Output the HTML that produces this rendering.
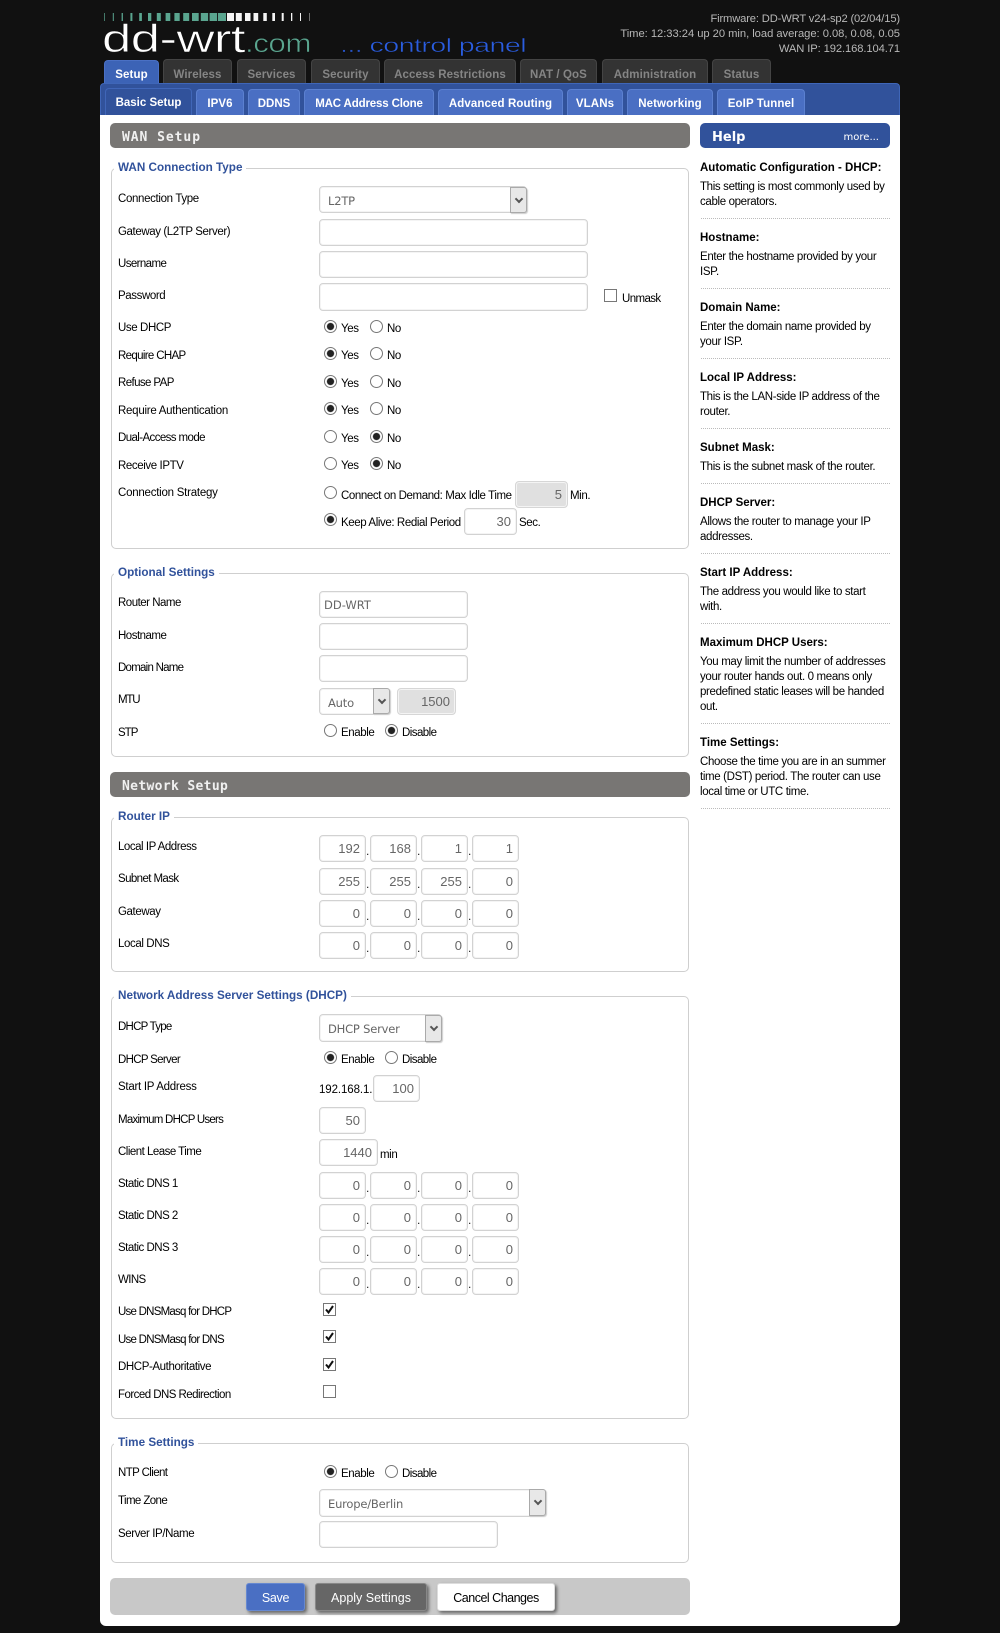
<!DOCTYPE html>
<html lang="en"><head><meta charset="utf-8"><title>DD-WRT Setup</title>
<style>
*{box-sizing:border-box}
html,body{margin:0;padding:0;background:#111}
body{position:relative;width:1000px;height:1633px;overflow:hidden;font:11.5px/14px "Liberation Sans",Arial,sans-serif;letter-spacing:-.4px;color:#000}
.t,.h,.tab,.sub,.bar,.fs,.lg,.sel,.ar,.dot,.p,.hd,.d,.btn,input,select,svg{position:absolute}
.t{white-space:nowrap;height:14px;margin-top:1px}
.h{left:500px;width:400px;text-align:right;color:#b8b8b8;font-size:11.2px;letter-spacing:-.1px;white-space:nowrap;margin-top:1px}
.tab{top:59px;height:24px;background:#333;border:1px solid #444;border-bottom:0;border-radius:4px 4px 0 0;color:#858585;font-weight:bold;font-size:11.5px;letter-spacing:.1px;text-align:center;line-height:30px}
.tab.on{top:60px;height:23px;background:#3c63b6;border-color:#4a70c4;color:#fff;line-height:28px}
#blue{position:absolute;left:100px;top:83px;width:800px;height:32px;background:#31529b;border:1px solid #3f66b8;border-bottom:0;border-radius:4px 4px 0 0}
.sub{top:89px;height:26px;background:#4a6fc3;border:1px solid #5b80d0;border-bottom:0;border-radius:4px 4px 0 0;color:#fff;font-weight:bold;font-size:11.5px;letter-spacing:.1px;text-align:center;line-height:28px}
.sub.on{top:88px;height:27px;background:#31529b;border-color:#4066b8;line-height:29px}
#main{position:absolute;left:100px;top:115px;width:800px;height:1511px;background:#fff;border-radius:0 0 6px 6px}
.bar{left:110px;width:580px;height:25px;background:#787674;border-radius:5px;color:#f0f0f0;font:bold 13px/29px "DejaVu Sans Mono",monospace;letter-spacing:.95px;padding-left:12px}
.fs{left:111px;width:578px;border:1px solid #cfcfcf;border-radius:5px}
.lg{left:114px;background:#fff;padding:0 4px;color:#31529b;font-weight:bold;font-size:11.7px;letter-spacing:0;line-height:14px;white-space:nowrap;margin-top:1px}
input[type=text],select{border:1px solid #d2d2d2;box-shadow:inset 0 0 0 1px #f4f4f4;border-radius:4px;background:#fff;height:27px;margin:0;font:13px "Liberation Sans",sans-serif;letter-spacing:0;color:#666;text-align:right;padding:0 5px;outline:0;appearance:none;-webkit-appearance:none}
input.dis{background:#e0e0e0;border-color:#d6d6d6}
select{text-align:left;padding:2px 8px 0;font:11.5px "DejaVu Sans",sans-serif!important;letter-spacing:-.2px!important}
.ar{width:17px;background:#e8e8e8;border:1px solid #aaa;box-shadow:1px 1px 1px #ccc;border-radius:0 3px 3px 0}
.ar:after{content:"";position:absolute;left:5px;top:8px;width:4px;height:4px;border:solid #555;border-width:0 2px 2px 0;transform:rotate(45deg)}
input[type=radio],input[type=checkbox]{appearance:none;-webkit-appearance:none;margin:0;width:13px;height:13px;background:#fff;border:1px solid #777}
input[type=radio]{border-radius:50%}
input[type=radio]:checked{background:radial-gradient(circle,#222 0,#222 3.2px,#fff 4px)}
.d{width:3px;color:#222;font-size:12px;line-height:14px}
.p{left:700px;width:195px;line-height:15px;white-space:nowrap;margin-top:1px;letter-spacing:-.35px}
.hd{left:700px;font-weight:bold;font-size:11.5px;letter-spacing:0;white-space:nowrap;line-height:14px;margin-top:1px}
.dot{left:701px;width:189px;border-top:1px dotted #bbb;height:0}
#help{left:700px;width:190px;background:#31529b;color:#fff;font-family:"DejaVu Sans",sans-serif;letter-spacing:0}
.btn{top:1583px;height:28px;border-radius:3px;font:12.5px/28px "Liberation Sans",sans-serif;text-align:center;box-shadow:2px 2px 3px #666;letter-spacing:0;border:1px solid #ddd}
</style></head><body>

<svg style="left:0;top:0" width="1000" height="60">
<g fill="#5aa58f">
<rect x="104" y="13" width=".7" height="8"/><rect x="112.8" y="13" width="1" height="8"/><rect x="121.6" y="13" width="1.3" height="8"/><rect x="130.4" y="13" width="2" height="8"/><rect x="139.2" y="13" width="2.7" height="8"/><rect x="148" y="13" width="3.3" height="8"/><rect x="156.8" y="13" width="4" height="8"/><rect x="165.6" y="13" width="4.7" height="8"/><rect x="174.4" y="13" width="5.3" height="8"/><rect x="183.2" y="13" width="6" height="8"/><rect x="192" y="13" width="6.7" height="8"/><rect x="200.8" y="13" width="7.3" height="8"/><rect x="209.6" y="13" width="7.5" height="8"/><rect x="218" y="13" width="8" height="8"/>
</g>
<g fill="#f4f4f4">
<rect x="227" y="13" width="7" height="8"/><rect x="235.8" y="13" width="6" height="8"/><rect x="245" y="13" width="5.5" height="8"/><rect x="253.5" y="13" width="4.7" height="8"/><rect x="263.3" y="13" width="3.5" height="8"/><rect x="272.3" y="13" width="2.7" height="8"/><rect x="281.7" y="13" width="2" height="8"/><rect x="291" y="13" width="1.3" height="8"/><rect x="300" y="13" width="1" height="8"/><rect x="309" y="13" width=".7" height="8" fill="#999"/>
</g>
<text x="102" y="52" font-family="Liberation Sans" font-size="39" fill="#fff" stroke="#111" stroke-width=".6" textLength="143" lengthAdjust="spacingAndGlyphs">dd-wrt</text>
<text x="245" y="52" font-family="Liberation Sans" font-size="26" fill="#5aa58f" stroke="#111" stroke-width=".6" textLength="66" lengthAdjust="spacingAndGlyphs">.com</text>
<text x="340" y="52" font-family="Liberation Sans" font-size="19.5" fill="#2a5de0" stroke="#111" stroke-width=".45" textLength="186" lengthAdjust="spacingAndGlyphs">... control panel</text>
</svg>
<div class="h" style="top:11px;letter-spacing:-.15px">Firmware: DD-WRT v24-sp2 (02/04/15)</div>
<div class="h" style="top:26px;letter-spacing:-.03px">Time: 12:33:24 up 20 min, load average: 0.08, 0.08, 0.05</div>
<div class="h" style="top:41px">WAN IP: 192.168.104.71</div>

<div class="tab on" style="left:104px;width:55px">Setup</div>
<div class="tab" style="left:163px;width:69px">Wireless</div>
<div class="tab" style="left:237px;width:69px">Services</div>
<div class="tab" style="left:311px;width:69px">Security</div>
<div class="tab" style="left:384px;width:132px">Access Restrictions</div>
<div class="tab" style="left:520px;width:77px">NAT / QoS</div>
<div class="tab" style="left:602px;width:106px">Administration</div>
<div class="tab" style="left:712px;width:59px">Status</div>

<div id="blue"></div>
<div class="sub on" style="left:105px;width:87px;letter-spacing:0">Basic Setup</div>
<div class="sub" style="left:196px;width:48px">IPV6</div>
<div class="sub" style="left:248px;width:52px;letter-spacing:0">DDNS</div>
<div class="sub" style="left:304px;width:130px;letter-spacing:-.15px">MAC Address Clone</div>
<div class="sub" style="left:438px;width:125px">Advanced Routing</div>
<div class="sub" style="left:567px;width:56px">VLANs</div>
<div class="sub" style="left:627px;width:86px">Networking</div>
<div class="sub" style="left:717px;width:88px">EoIP Tunnel</div>

<div id="main"></div>

<div class="bar" style="top:123px">WAN Setup</div>
<div class="bar" id="help" style="top:123px;font-weight:bold;font-size:13px">Help<span style="position:absolute;right:11px;top:0;font-weight:normal;font-size:10px;font-family:'DejaVu Sans',sans-serif">more...</span></div>

<!-- WAN Connection Type -->
<div class="fs" style="top:168px;height:381px"></div>
<div class="lg" style="top:160px">WAN Connection Type</div>
<div class="t" style="left:118px;top:191px;letter-spacing:-.35px">Connection Type</div>
<div class="t" style="left:118px;top:224px">Gateway (L2TP Server)</div>
<div class="t" style="left:118px;top:256px;letter-spacing:-.6px">Username</div>
<div class="t" style="left:118px;top:288px">Password</div>
<div class="t" style="left:118px;top:320px">Use DHCP</div>
<div class="t" style="left:118px;top:348px;letter-spacing:-.66px">Require CHAP</div>
<div class="t" style="left:118px;top:375px;letter-spacing:-.6px">Refuse PAP</div>
<div class="t" style="left:118px;top:403px;letter-spacing:-.26px">Require Authentication</div>
<div class="t" style="left:118px;top:430px;letter-spacing:-.6px">Dual-Access mode</div>
<div class="t" style="left:118px;top:458px">Receive IPTV</div>
<div class="t" style="left:118px;top:485px;letter-spacing:-.24px">Connection Strategy</div>

<select style="left:319px;top:186px;width:208px"><option>L2TP</option></select><div class="ar" style="left:510px;top:187px;height:26px"></div>
<input type="text" style="left:319px;top:219px;width:269px">
<input type="text" style="left:319px;top:251px;width:269px">
<input type="text" style="left:319px;top:283px;width:269px;height:28px">
<input type="checkbox" style="left:604px;top:289px"><div class="t" style="left:622px;top:291px;letter-spacing:-.6px">Unmask</div>

<input type="radio" checked style="left:324px;top:320px"><div class="t" style="left:341px;top:321px">Yes</div><input type="radio" style="left:370px;top:320px"><div class="t" style="left:387px;top:321px">No</div>
<input type="radio" checked style="left:324px;top:347px"><div class="t" style="left:341px;top:348px">Yes</div><input type="radio" style="left:370px;top:347px"><div class="t" style="left:387px;top:348px">No</div>
<input type="radio" checked style="left:324px;top:375px"><div class="t" style="left:341px;top:376px">Yes</div><input type="radio" style="left:370px;top:375px"><div class="t" style="left:387px;top:376px">No</div>
<input type="radio" checked style="left:324px;top:402px"><div class="t" style="left:341px;top:403px">Yes</div><input type="radio" style="left:370px;top:402px"><div class="t" style="left:387px;top:403px">No</div>
<input type="radio" style="left:324px;top:430px"><div class="t" style="left:341px;top:431px">Yes</div><input type="radio" checked style="left:370px;top:430px"><div class="t" style="left:387px;top:431px">No</div>
<input type="radio" style="left:324px;top:457px"><div class="t" style="left:341px;top:458px">Yes</div><input type="radio" checked style="left:370px;top:457px"><div class="t" style="left:387px;top:458px">No</div>
<input type="radio" style="left:324px;top:486px"><div class="t" style="left:341px;top:488px">Connect on Demand: Max Idle Time</div>
<input type="text" class="dis" value="5" style="left:515px;top:481px;width:53px">
<div class="t" style="left:570px;top:488px">Min.</div>
<input type="radio" checked style="left:324px;top:513px"><div class="t" style="left:341px;top:515px">Keep Alive: Redial Period</div>
<input type="text" value="30" style="left:464px;top:508px;width:53px">
<div class="t" style="left:519px;top:515px">Sec.</div>

<!-- Optional Settings -->
<div class="fs" style="top:573px;height:184px"></div>
<div class="lg" style="top:565px">Optional Settings</div>
<div class="t" style="left:118px;top:595px;letter-spacing:-.5px">Router Name</div>
<div class="t" style="left:118px;top:628px;letter-spacing:-.5px">Hostname</div>
<div class="t" style="left:118px;top:660px;letter-spacing:-.75px">Domain Name</div>
<div class="t" style="left:118px;top:692px;letter-spacing:-1.2px">MTU</div>
<div class="t" style="left:118px;top:725px;letter-spacing:-1px">STP</div>
<input type="text" value="DD-WRT" style="left:319px;top:591px;width:149px;text-align:left;padding-left:4px;font:11.5px 'DejaVu Sans',sans-serif">
<input type="text" style="left:319px;top:623px;width:149px">
<input type="text" style="left:319px;top:655px;width:149px">
<select style="left:319px;top:688px;width:71px"><option>Auto</option></select><div class="ar" style="left:373px;top:688px;height:26px"></div>
<input type="text" class="dis" value="1500" style="left:397px;top:688px;width:59px">
<input type="radio" style="left:324px;top:724px"><div class="t" style="left:341px;top:725px">Enable</div>
<input type="radio" checked style="left:385px;top:724px"><div class="t" style="left:402px;top:725px;letter-spacing:-.55px">Disable</div>

<div class="bar" style="top:772px;letter-spacing:.34px">Network Setup</div>

<!-- Router IP -->
<div class="fs" style="top:817px;height:155px"></div>
<div class="lg" style="top:809px">Router IP</div>
<div class="t" style="left:118px;top:839px;letter-spacing:-.47px">Local IP Address</div>
<div class="t" style="left:118px;top:871px;letter-spacing:-.6px">Subnet Mask</div>
<div class="t" style="left:118px;top:904px">Gateway</div>
<div class="t" style="left:118px;top:936px">Local DNS</div>

<input type="text" value="192" style="left:319px;top:835px;width:47px"><div class="d" style="left:366px;top:844px">.</div><input type="text" value="168" style="left:370px;top:835px;width:47px"><div class="d" style="left:417px;top:844px">.</div><input type="text" value="1" style="left:421px;top:835px;width:47px"><div class="d" style="left:468px;top:844px">.</div><input type="text" value="1" style="left:472px;top:835px;width:47px">
<input type="text" value="255" style="left:319px;top:868px;width:47px"><div class="d" style="left:366px;top:877px">.</div><input type="text" value="255" style="left:370px;top:868px;width:47px"><div class="d" style="left:417px;top:877px">.</div><input type="text" value="255" style="left:421px;top:868px;width:47px"><div class="d" style="left:468px;top:877px">.</div><input type="text" value="0" style="left:472px;top:868px;width:47px">
<input type="text" value="0" style="left:319px;top:900px;width:47px"><div class="d" style="left:366px;top:909px">.</div><input type="text" value="0" style="left:370px;top:900px;width:47px"><div class="d" style="left:417px;top:909px">.</div><input type="text" value="0" style="left:421px;top:900px;width:47px"><div class="d" style="left:468px;top:909px">.</div><input type="text" value="0" style="left:472px;top:900px;width:47px">
<input type="text" value="0" style="left:319px;top:932px;width:47px"><div class="d" style="left:366px;top:941px">.</div><input type="text" value="0" style="left:370px;top:932px;width:47px"><div class="d" style="left:417px;top:941px">.</div><input type="text" value="0" style="left:421px;top:932px;width:47px"><div class="d" style="left:468px;top:941px">.</div><input type="text" value="0" style="left:472px;top:932px;width:47px">

<!-- DHCP -->
<div class="fs" style="top:996px;height:423px"></div>
<div class="lg" style="top:988px">Network Address Server Settings (DHCP)</div>
<div class="t" style="left:118px;top:1019px;letter-spacing:-.75px">DHCP Type</div>
<div class="t" style="left:118px;top:1052px;letter-spacing:-.68px">DHCP Server</div>
<div class="t" style="left:118px;top:1079px;letter-spacing:-.27px">Start IP Address</div>
<div class="t" style="left:118px;top:1112px;letter-spacing:-.75px">Maximum DHCP Users</div>
<div class="t" style="left:118px;top:1144px;letter-spacing:-.52px">Client Lease Time</div>
<div class="t" style="left:118px;top:1176px;letter-spacing:-.5px">Static DNS 1</div>
<div class="t" style="left:118px;top:1208px;letter-spacing:-.5px">Static DNS 2</div>
<div class="t" style="left:118px;top:1240px;letter-spacing:-.5px">Static DNS 3</div>
<div class="t" style="left:118px;top:1272px;letter-spacing:-.6px">WINS</div>
<div class="t" style="left:118px;top:1304px;letter-spacing:-.76px">Use DNSMasq for DHCP</div>
<div class="t" style="left:118px;top:1332px;letter-spacing:-.75px">Use DNSMasq for DNS</div>
<div class="t" style="left:118px;top:1359px">DHCP-Authoritative</div>
<div class="t" style="left:118px;top:1387px;letter-spacing:-.54px">Forced DNS Redirection</div>

<select style="left:319px;top:1014px;width:123px;height:28px"><option>DHCP Server</option></select><div class="ar" style="left:425px;top:1015px;height:27px"></div>
<input type="radio" checked style="left:324px;top:1051px"><div class="t" style="left:341px;top:1052px">Enable</div>
<input type="radio" style="left:385px;top:1051px"><div class="t" style="left:402px;top:1052px;letter-spacing:-.55px">Disable</div>
<div class="t" style="left:319px;top:1082px;letter-spacing:-.1px">192.168.1.</div><input type="text" value="100" style="left:373px;top:1075px;width:47px">
<input type="text" value="50" style="left:319px;top:1107px;width:47px">
<input type="text" value="1440" style="left:319px;top:1139px;width:59px"><div class="t" style="left:380px;top:1147px">min</div>

<input type="text" value="0" style="left:319px;top:1172px;width:47px"><div class="d" style="left:366px;top:1181px">.</div><input type="text" value="0" style="left:370px;top:1172px;width:47px"><div class="d" style="left:417px;top:1181px">.</div><input type="text" value="0" style="left:421px;top:1172px;width:47px"><div class="d" style="left:468px;top:1181px">.</div><input type="text" value="0" style="left:472px;top:1172px;width:47px">
<input type="text" value="0" style="left:319px;top:1204px;width:47px"><div class="d" style="left:366px;top:1213px">.</div><input type="text" value="0" style="left:370px;top:1204px;width:47px"><div class="d" style="left:417px;top:1213px">.</div><input type="text" value="0" style="left:421px;top:1204px;width:47px"><div class="d" style="left:468px;top:1213px">.</div><input type="text" value="0" style="left:472px;top:1204px;width:47px">
<input type="text" value="0" style="left:319px;top:1236px;width:47px"><div class="d" style="left:366px;top:1245px">.</div><input type="text" value="0" style="left:370px;top:1236px;width:47px"><div class="d" style="left:417px;top:1245px">.</div><input type="text" value="0" style="left:421px;top:1236px;width:47px"><div class="d" style="left:468px;top:1245px">.</div><input type="text" value="0" style="left:472px;top:1236px;width:47px">
<input type="text" value="0" style="left:319px;top:1268px;width:47px"><div class="d" style="left:366px;top:1277px">.</div><input type="text" value="0" style="left:370px;top:1268px;width:47px"><div class="d" style="left:417px;top:1277px">.</div><input type="text" value="0" style="left:421px;top:1268px;width:47px"><div class="d" style="left:468px;top:1277px">.</div><input type="text" value="0" style="left:472px;top:1268px;width:47px">

<input type="checkbox" style="left:323px;top:1303px"><svg style="left:323px;top:1303px" width="13" height="13"><path d="M3 6.5 L5.5 9.5 L10 3" fill="none" stroke="#111" stroke-width="2"/></svg>
<input type="checkbox" style="left:323px;top:1330px"><svg style="left:323px;top:1330px" width="13" height="13"><path d="M3 6.5 L5.5 9.5 L10 3" fill="none" stroke="#111" stroke-width="2"/></svg>
<input type="checkbox" style="left:323px;top:1358px"><svg style="left:323px;top:1358px" width="13" height="13"><path d="M3 6.5 L5.5 9.5 L10 3" fill="none" stroke="#111" stroke-width="2"/></svg>
<input type="checkbox" style="left:323px;top:1385px">

<!-- Time Settings -->
<div class="fs" style="top:1443px;height:120px"></div>
<div class="lg" style="top:1435px">Time Settings</div>
<div class="t" style="left:118px;top:1465px;letter-spacing:-.6px">NTP Client</div>
<div class="t" style="left:118px;top:1493px;letter-spacing:-.6px">Time Zone</div>
<div class="t" style="left:118px;top:1526px">Server IP/Name</div>
<input type="radio" checked style="left:324px;top:1465px"><div class="t" style="left:341px;top:1466px">Enable</div>
<input type="radio" style="left:385px;top:1465px"><div class="t" style="left:402px;top:1466px;letter-spacing:-.55px">Disable</div>
<select style="left:319px;top:1489px;width:227px;height:28px"><option>Europe/Berlin</option></select><div class="ar" style="left:529px;top:1489px;height:27px"></div>
<input type="text" style="left:319px;top:1521px;width:179px">

<!-- Buttons -->
<div style="position:absolute;left:110px;top:1578px;width:580px;height:37px;background:#c8c8c8;border-radius:5px"></div>
<div class="btn" style="left:246px;width:59px;background:#4a6fc3;color:#fff;border-color:#6688d0;letter-spacing:-.3px">Save</div>
<div class="btn" style="left:315px;width:112px;background:#666;color:#fff;border-color:#888">Apply Settings</div>
<div class="btn" style="left:437px;width:118px;background:#fff;color:#000;letter-spacing:-.5px">Cancel Changes</div>

<!-- Help -->
<div class="hd" style="top:160px">Automatic Configuration - DHCP:</div>
<div class="p" style="top:179px">This setting is most commonly used by<br>cable operators.</div>
<div class="dot" style="top:218px"></div>
<div class="hd" style="top:230px">Hostname:</div>
<div class="p" style="top:249px">Enter the hostname provided by your<br>ISP.</div>
<div class="dot" style="top:288px"></div>
<div class="hd" style="top:300px">Domain Name:</div>
<div class="p" style="top:319px">Enter the domain name provided by<br>your ISP.</div>
<div class="dot" style="top:358px"></div>
<div class="hd" style="top:370px">Local IP Address:</div>
<div class="p" style="top:389px">This is the LAN-side IP address of the<br>router.</div>
<div class="dot" style="top:428px"></div>
<div class="hd" style="top:440px">Subnet Mask:</div>
<div class="p" style="top:459px">This is the subnet mask of the router.</div>
<div class="dot" style="top:483px"></div>
<div class="hd" style="top:495px">DHCP Server:</div>
<div class="p" style="top:514px">Allows the router to manage your IP<br>addresses.</div>
<div class="dot" style="top:553px"></div>
<div class="hd" style="top:565px">Start IP Address:</div>
<div class="p" style="top:584px">The address you would like to start<br>with.</div>
<div class="dot" style="top:623px"></div>
<div class="hd" style="top:635px">Maximum DHCP Users:</div>
<div class="p" style="top:654px">You may limit the number of addresses<br>your router hands out. 0 means only<br>predefined static leases will be handed<br>out.</div>
<div class="dot" style="top:723px"></div>
<div class="hd" style="top:735px">Time Settings:</div>
<div class="p" style="top:754px">Choose the time you are in an summer<br>time (DST) period. The router can use<br>local time or UTC time.</div>
<div class="dot" style="top:808px"></div>
</body></html>
